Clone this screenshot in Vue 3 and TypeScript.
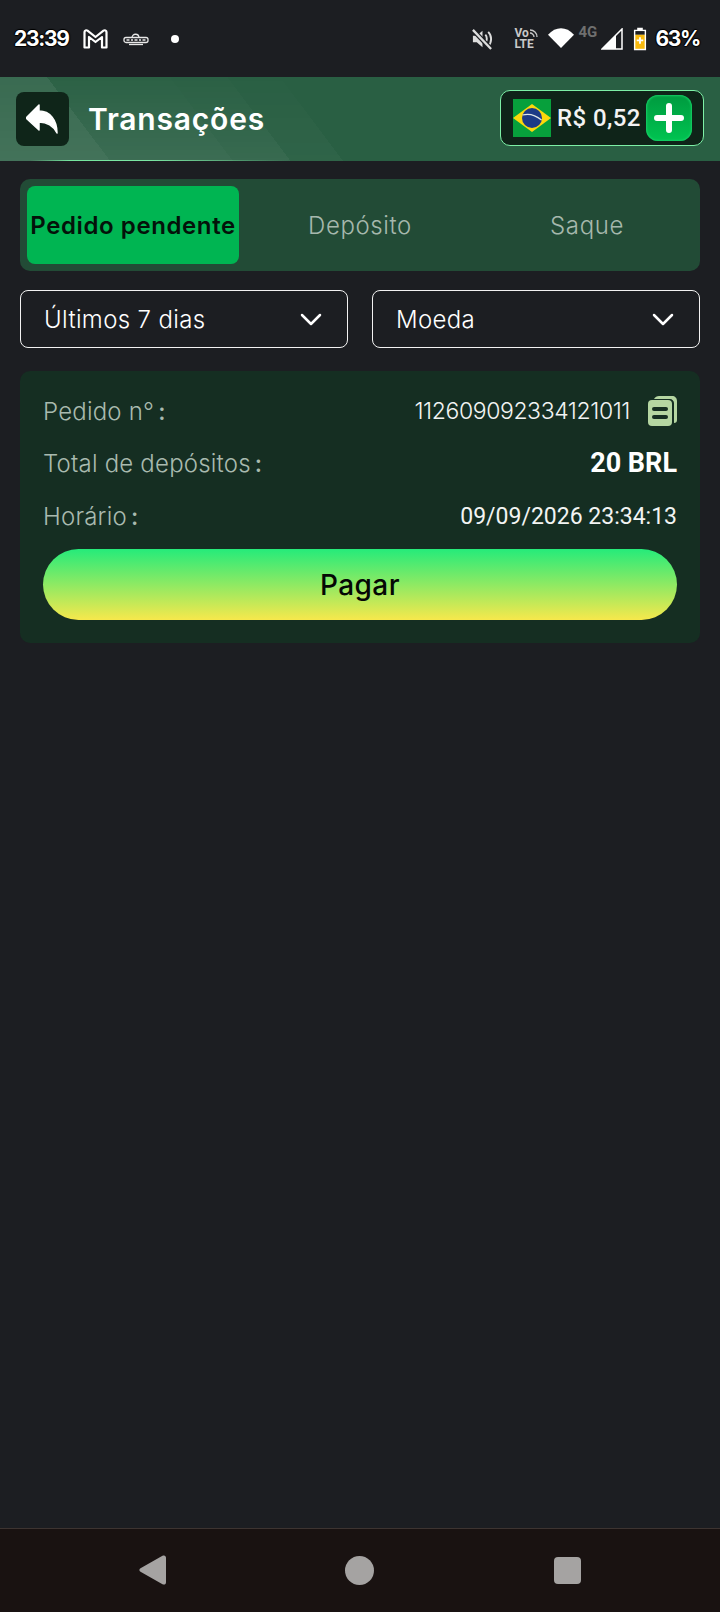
<script setup lang="ts">
const tabs = ['Pedido pendente', 'Depósito', 'Saque']
const filters = ['Últimos 7 dias', 'Moeda']
</script>

<template>
  <div class="page">
    <div class="status">
      <span class="time">23:39</span>
      <svg class="gmail" width="25" height="20" viewBox="0 0 25 20" fill="none" stroke="#fff" stroke-width="2.200" stroke-linejoin="round">
        <path d="M1.500 18.500V3c0-1.600 1.800-2.200 3-1.300l8 6.300 8-6.300c1.200-.9 3-.3 3 1.300v15.500h-4.500V8l-6.500 5-6.500-5v10.500z" />
      </svg>
      <svg class="app" width="26" height="13" viewBox="0 0 26 13" fill="none" stroke="#e8e8e8" stroke-width="1.300">
        <path d="M9 5c0-5 7-5 7 0" />
        <rect x="1" y="4.500" width="24" height="5" rx="2" />
        <path d="M3.500 7h3M8 7h2M11.500 7h3M16 7h2M19.500 7h3" stroke-width="1.500" />
        <path d="M6 11.500h14" />
      </svg>
      <span class="dot"></span>

      <svg class="mute" width="22" height="22" viewBox="0 0 23 23" fill="none" stroke="#ddd" stroke-width="2.400">
        <path d="M2 8v7h4l6 5V3L6 8z" fill="#ddd" stroke="none" />
        <path d="M15 7c2 2 2 6 0 9M18 4c4 4 4 11 0 15" stroke-width="2" />
        <path d="M2 2l19 20" stroke="#1c1e22" stroke-width="5" />
        <path d="M2 2l19 20" />
      </svg>
      <span class="volte"><span class="vo">Vo<svg width="10" height="9" viewBox="0 0 10 9" fill="none" stroke="#c9c9c9" stroke-width="1.300"><path d="M1 4c2 0 4 2 4 4M1 1c4 0 7 3 7 7" /></svg></span><span>LTE</span></span>
      <svg class="wifi" width="26" height="22" viewBox="0 0 27 21" fill="#fff"><path d="M13.500 21L0 7C8-2 19-2 27 7z" /></svg>
      <span class="net">4G</span>
      <svg class="signal" width="22" height="22" viewBox="0 0 22 22"><path d="M21 1v20H1z" fill="none" stroke="#fff" stroke-width="1.500" /><path d="M15 7v14H1z" fill="#fff" /></svg>
      <svg class="battery" width="14" height="24" viewBox="0 0 15 24">
        <path d="M4.500 0h6v2h3.500v22H1V2h3.500z" fill="#fff" />
        <rect x="2.500" y="3.500" width="10" height="4" fill="#1c1e22" />
        <rect x="2.500" y="7.500" width="10" height="15" fill="#f8b90d" />
        <path d="M6.500 10h2v2.500H11v2H8.500V17h-2v-2.500H4v-2h2.500z" fill="#fff" />
      </svg>
      <span class="pct">63%</span>
    </div>

    <header class="top">
      <button type="button" class="back">
        <svg width="32" height="30" viewBox="0 0 32 30" fill="#fff">
          <path d="M13 1L0 14l13 12v-8c8 0 14 3 18 11 0-13-7-22-18-22z" stroke="#fff" stroke-width="1.500" stroke-linejoin="round" />
        </svg>
      </button>
      <h1 class="title">Transações</h1>
      <div class="wallet">
        <svg class="flag" width="38" height="38" viewBox="0 0 38 38">
          <rect width="38" height="38" fill="#07a03c" />
          <path d="M0 19L19 5l19 14-19 14z" fill="#fbd80c" />
          <circle cx="19" cy="19" r="10" fill="#1c3a86" />
          <path d="M9.500 16c7-2 13 0 19 5" fill="none" stroke="#dfe6e6" stroke-width="1.200" />
        </svg>
        <span class="amount">R$ 0,52</span>
        <button type="button" class="plus">
          <svg width="30" height="30" viewBox="0 0 30 30" stroke="#fff" stroke-width="6" stroke-linecap="round">
            <path d="M15 3v24M3 15h24" />
          </svg>
        </button>
      </div>
    </header>

    <main class="content">
      <div class="tabs">
        <div v-for="(tab, i) in tabs" :key="tab" class="tab" :class="{ 'tab--active': i === 0 }">{{ tab }}</div>
      </div>

      <div class="filters">
        <div v-for="item in filters" :key="item" class="select">
          <span>{{ item }}</span>
          <svg width="22" height="13" viewBox="0 0 22 13" fill="none" stroke="#fff" stroke-width="2.500" stroke-linecap="round" stroke-linejoin="round">
            <path d="M2 2l9 9 9-9" />
          </svg>
        </div>
      </div>

      <section class="card">
        <div class="row row--one">
          <span class="label">Pedido n°<span class="colon">:</span></span>
          <span class="order">
            112609092334121011
            <svg width="29" height="30" viewBox="0 0 29 30">
              <path d="M11 0h13c3 0 5 2 5 5v19c0 2-1 3-3 3V7c0-2-2-4-4-4H6c1-2 3-3 5-3z" fill="#b5d6a2" />
              <rect y="4" width="24" height="26" rx="4" fill="#b5d6a2" />
              <rect x="4" y="11" width="16" height="4" rx="2" fill="#152e22" />
              <rect x="4" y="19" width="16" height="4" rx="2" fill="#152e22" />
            </svg>
          </span>
        </div>
        <div class="row row--two">
          <span class="label">Total de depósitos<span class="colon">:</span></span>
          <span class="total">20 BRL</span>
        </div>
        <div class="row row--three">
          <span class="label">Horário<span class="colon">:</span></span>
          <span class="date">09/09/2026 23:34:13</span>
        </div>
        <button type="button" class="pay">Pagar</button>
      </section>
    </main>

    <nav class="nav">
      <svg width="28" height="30" viewBox="0 0 28 30" fill="#a5a3a2"><path d="M1.500 13.300L23.500.800c2-1 3.500 0 3.500 2v24.400c0 2-1.500 3-3.500 2L1.500 16.700c-1.500-1-1.500-2.400 0-3.400z" /></svg>
      <span class="home"></span>
      <span class="recent"></span>
    </nav>
  </div>
</template>

<style>
body {
  background: #1c1e22;
}
</style>

<style scoped>
.page {
  width: 720px;
  height: 1612px;
  display: flex;
  flex-direction: column;
  background: #1c1e22;
  font-family: Inter, "Noto Sans", sans-serif;
  color: #fff;
}

.status {
  height: 77px;
  flex-shrink: 0;
  display: flex;
  align-items: center;
  padding: 0 20px 0 14px;
  box-sizing: border-box;
}

.time,
.pct {
  font: 700 21px Inter, sans-serif;
  letter-spacing: -1.300px;
  text-shadow: 1px 0 1px #000, -1px 0 1px #000, 0 1px 1px #000, 0 -1px 1px #000;
}

.time {
  width: 53px;
}

.gmail {
  margin-left: 16px;
}

.app {
  margin-left: 15px;
  margin-top: 1px;
}

.dot {
  width: 8px;
  height: 8px;
  border-radius: 50%;
  background: #fff;
  margin-left: 22px;
}

.mute {
  margin-left: auto;
}

.volte {
  margin-left: 21px;
  display: flex;
  flex-direction: column;
  font: 700 12px/11px Roboto, sans-serif;
  color: #c9c9c9;
  width: 25px;
}

.vo {
  display: flex;
  align-items: center;
}

.wifi {
  margin-left: 9px;
  margin-top: -2px;
}

.net {
  margin-left: 4px;
  margin-top: -14px;
  font: 700 15px Roboto, sans-serif;
  color: #6f6f6f;
  width: 20px;
}

.signal {
  margin-left: 3px;
}

.battery {
  margin-left: 10px;
}

.pct {
  margin-left: 8px;
}

.top {
  height: 84px;
  flex-shrink: 0;
  position: relative;
  display: flex;
  align-items: center;
  padding: 0 16px;
  box-sizing: border-box;
  background:
    linear-gradient(90deg, transparent 30px, #6ee59a 70px, #6ee59a 150px, transparent 290px) bottom / 100% 1px no-repeat,
    linear-gradient(53deg, rgba(255, 255, 255, 0.07) 0 88px, transparent 88px),
    #295f43;
}

.top::before {
  content: '';
  position: absolute;
  inset: 0;
  background: linear-gradient(53deg, rgba(255, 255, 255, 0.06) 0 88px, rgba(255, 255, 255, 0.09) 88px 186px, rgba(255, 255, 255, 0.07) 186px 232px, rgba(255, 255, 255, 0.03) 232px 274px, transparent 274px);
  -webkit-mask-image: linear-gradient(to top, #000, rgba(0, 0, 0, 0.15));
  mask-image: linear-gradient(to top, #000, rgba(0, 0, 0, 0.15));
}

.top > * {
  position: relative;
}

.back {
  width: 53px;
  height: 54px;
  padding: 0 2px 0 0;
  border: 0;
  border-radius: 8px;
  background: #0f2519;
  display: flex;
  align-items: center;
  justify-content: center;
}

.title {
  margin: 0 0 0 19px;
  font-size: 30px;
  font-weight: 600;
  letter-spacing: 0.800px;
}

.wallet {
  margin-left: auto;
  margin-top: -2px;
  width: 204px;
  height: 56px;
  box-sizing: border-box;
  display: flex;
  align-items: center;
  padding: 0 11px 0 12px;
  border: 1px solid #7df0a6;
  border-radius: 10px;
  background: #0f2419;
}

.flag {
  flex-shrink: 0;
}

.amount {
  margin-left: 6px;
  font: 500 24px Roboto, sans-serif;
  letter-spacing: 0.400px;
  white-space: nowrap;
  color: #f3f3f3;
}

.plus {
  margin-left: auto;
  width: 46px;
  height: 46px;
  padding: 0;
  border: 0;
  border-radius: 12px;
  background: linear-gradient(180deg, #009a3f, #00c451);
  box-shadow: inset 0 0 2px 1px #16cf66;
  display: flex;
  align-items: center;
  justify-content: center;
}

.content {
  padding: 18px 20px 0;
  display: flex;
  flex-direction: column;
}

.tabs {
  height: 92px;
  box-sizing: border-box;
  padding: 7px;
  display: grid;
  grid-template-columns: repeat(3, 1fr);
  column-gap: 15px;
  background: #224b36;
  border-radius: 10px;
}

.tab {
  display: flex;
  align-items: center;
  justify-content: center;
  white-space: nowrap;
  font-size: 24px;
  letter-spacing: 0.600px;
  font-weight: 300;
  color: #a6b8ad;
  border-radius: 8px;
}

.tab--active {
  background: #00b552;
  color: #04120a;
  font-weight: 600;
  letter-spacing: 0.600px;
}

.filters {
  margin-top: 19px;
  display: grid;
  grid-template-columns: repeat(2, 328px);
  justify-content: space-between;
}

.select {
  height: 58px;
  box-sizing: border-box;
  padding: 0 14px 0 23px;
  display: flex;
  align-items: center;
  justify-content: space-between;
  border: 1px solid #f2f2f2;
  border-radius: 8px;
  font-size: 24px;
  font-weight: 300;
  letter-spacing: 0.350px;
}

.select svg {
  margin-right: 11px;
}

.card {
  margin-top: 23px;
  height: 272px;
  box-sizing: border-box;
  padding: 22px 23px 0 23px;
  display: flex;
  flex-direction: column;
  background: #152e22;
  border-radius: 10px;
}

.row {
  display: flex;
  align-items: center;
  justify-content: space-between;
  height: 36px;
}

.row--two {
  margin-top: 16px;
}

.row--three {
  margin-top: 17px;
}

.label {
  font-size: 24px;
  font-weight: 300;
  letter-spacing: 0.200px;
  color: #a9baaf;
  white-space: nowrap;
}

.colon {
  margin-left: 4px;
  font-weight: 500;
}

.order {
  display: flex;
  align-items: center;
  gap: 18px;
  font-size: 23px;
  font-weight: 300;
  letter-spacing: -0.400px;
  color: #f2f4f3;
}

.total {
  font: 700 27px Roboto, sans-serif;
}

.date {
  font: 400 23px Roboto, sans-serif;
  color: #f2f4f3;
}

.pay {
  margin-top: 15px;
  height: 71px;
  padding: 0;
  border: 0;
  border-radius: 36px;
  background: linear-gradient(180deg, #25eb7a, #f7e84c);
  font: 500 28px Inter, sans-serif;
  letter-spacing: 0.400px;
  color: #050805;
}

.nav {
  margin-top: auto;
  height: 84px;
  flex-shrink: 0;
  box-sizing: border-box;
  border-top: 1px solid #3d3431;
  background: #191211;
  display: grid;
  grid-template-columns: 1fr 1fr 1fr;
  align-items: center;
  justify-items: center;
  padding: 0 49px;
}

.nav svg {
  margin-top: -1px;
}

.home {
  width: 29px;
  height: 29px;
  border-radius: 50%;
  background: #a5a3a2;
}

.recent {
  width: 27px;
  height: 27px;
  border-radius: 4px;
  background: #a5a3a2;
}
</style>
